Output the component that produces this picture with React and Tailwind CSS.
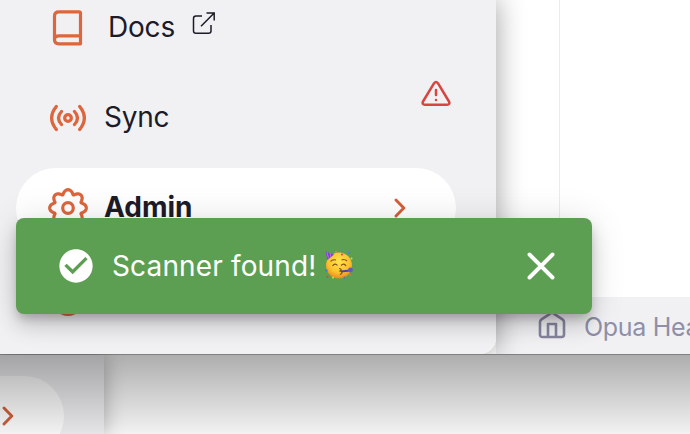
import React from "react";

function Book() {
  return (
    <svg className="h-[40px] w-[36px] shrink-0" viewBox="0 0 36 40" fill="none" stroke="#dc663d" strokeWidth="3.200" strokeLinejoin="round" strokeLinecap="round">
      <path d="M4.500 32V8Q4.500 3.800 9 3.800H29Q30.500 3.800 30.500 5.200V27.800M9 27.800H30.500M9 35.800H30.500M9 35.800Q4.500 35.800 4.500 31.800Q4.500 27.800 9 27.800M30.500 27.800V35.800" />
    </svg>
  );
}
function External() {
  return (
    <svg className="h-[24px] w-[24px] shrink-0" viewBox="0 0 24 24" fill="none" stroke="#1c1b27" strokeWidth="1.500">
      <path d="M10 4H4Q1.500 4 1.500 6.500V19Q1.500 21.300 4 21.300H16.500Q19 21.300 19 19V13M14.500 1H22.200V8.500M22.200 1L9 14.200" />
    </svg>
  );
}
function Signal() {
  return (
    <svg className="h-[28px] w-[40px] shrink-0" viewBox="0 0 40 28" fill="none" stroke="#dc663d" strokeWidth="3.300" strokeLinecap="round">
      <circle cx="20" cy="14" r="3.300" />
      <path d="M13.500 7.500Q7.500 14 13.500 20.500M26.500 7.500Q32.500 14 26.500 20.500M8.300 2.500Q-1 14 8.300 25.500M31.700 2.500Q41 14 31.700 25.500" />
    </svg>
  );
}

const gearOutline = Array.from({ length: 160 }, (_, i) => {
  const t = (i / 160) * Math.PI * 2;
  const a = t + Math.sin(8 * t) * 0.055;
  const r = 16.2 + 2.1 * Math.cos(8 * t);
  return `${(24 + r * Math.sin(a)).toFixed(2)},${(24 - r * Math.cos(a)).toFixed(2)}`;
}).join(" ");

function Gear() {
  return (
    <svg className="h-[48px] w-[48px] shrink-0" viewBox="0 0 48 48" fill="none" stroke="#dc663d" strokeWidth="3.200" strokeLinejoin="round">
      <polygon points={gearOutline} />
      <circle cx="24" cy="24" r="5.300" />
    </svg>
  );
}
function Warning() {
  return (
    <svg className="h-[28px] w-[30px] shrink-0" viewBox="0 0 30 28" fill="none" stroke="#d6453f" strokeWidth="2.500" strokeLinecap="round" strokeLinejoin="round">
      <path d="M13.100 3.200Q15 .8 16.900 3.200L28 21.500Q29.300 24.800 26 24.800H4Q.7 24.800 2 21.500ZM15 10V15M15 20V20.100" />
    </svg>
  );
}
function Chevron() {
  return (
    <svg className="h-[20px] w-[12px] shrink-0" viewBox="0 0 12 20" fill="none" stroke="#d2603a" strokeWidth="2.900" strokeLinecap="round" strokeLinejoin="round">
      <path d="M2 2L9.800 10L2 18" />
    </svg>
  );
}
function Home() {
  return (
    <svg className="h-[32px] w-[28px] shrink-0" viewBox="0 0 28 32" fill="none" stroke="#85859e" strokeWidth="2.600" strokeLinejoin="round">
      <path d="M2 11Q2 9.500 3.500 8.400L14 1.500L24.500 8.400Q26 9.500 26 11V23.500Q26 26 23.500 26H4.500Q2 26 2 23.500ZM10 26V13H18V26" />
    </svg>
  );
}
function PartyFace() {
  return (
    <svg className="h-[30px] w-[30px] shrink-0" viewBox="0 0 30 30">
      <defs>
        <radialGradient id="face" cx=".5" cy=".35" r=".65">
          <stop offset="0" stopColor="#ffe64a" />
          <stop offset=".65" stopColor="#fcc12d" />
          <stop offset="1" stopColor="#e88b1a" />
        </radialGradient>
      </defs>
      <circle cx="15" cy="15.500" r="13" fill="url(#face)" />
      <path d="M1.500 1.500L10 4.500L3.500 10Z" fill="#7b43cc" />
      <path d="M3 2L4.500 8.500M6 3L7 7" stroke="#bb70df" strokeWidth="1" />
      <path d="M6.500 11.500Q8.500 9 12 10M17.500 10Q20.500 8.500 23 11M8.500 16Q11 12.500 13.500 15.500M17 15.500Q20 12.500 22 16" fill="none" stroke="#80501a" strokeWidth="1.100" />
      <path d="M15 18.500Q19 19 16 21Q20 22.500 16 24.500" fill="none" stroke="#80501a" strokeWidth="1.200" />
      <path d="M17 21.500L26 20.500" stroke="#4246a8" strokeWidth="2" />
      <circle cx="26.500" cy="20" r="2.400" fill="#6756bd" />
      <circle cx="12" cy="2" r="1" fill="#e5893a" />
      <circle cx="18" cy="4.500" r="1" fill="#df3c4f" />
      <circle cx="25" cy="3" r="1.100" fill="#477ae0" />
      <circle cx="27.500" cy="8.500" r="1" fill="#d5de49" />
      <circle cx="2.500" cy="20.500" r="1.100" fill="#3b74d2" />
      <circle cx="3.500" cy="27" r="1.100" fill="#dc4050" />
      <circle cx="9" cy="27.500" r="1" fill="#dcda40" />
      <circle cx="20.500" cy="27.500" r="1" fill="#7960c2" />
      <circle cx="26" cy="25" r="1" fill="#dd7143" />
    </svg>
  );
}

function Sidebar() {
  return (
    <nav className="relative z-10 h-[354px] w-[496px] shrink-0 overflow-hidden rounded-br-[16px] bg-[#f1f1f4] text-[28px] leading-[36px] text-[#1c1b27]">
      <div className="flex h-[72px] pl-[50px] pt-[8px]">
        <Book />
        <span className="ml-[22px] mt-px tracking-[-0.2px]">Docs</span>
        <span className="ml-[17px] mt-[4px]"><External /></span>
      </div>
      <div className="flex h-[96px] pl-[48px] pt-[8px]">
        <span className="mt-[24px]"><Signal /></span>
        <span className="ml-[16px] mt-[19px] tracking-[-0.25px]">Sync</span>
        <span className="ml-auto mr-[45px]"><Warning /></span>
      </div>
      <div className="ml-[16px] flex h-[80px] w-[440px] items-center rounded-[40px] bg-white pl-[28px] pr-[50px]">
        <Gear />
        <span className="mb-[2px] ml-[12px] font-bold">Admin</span>
        <span className="ml-auto"><Chevron /></span>
      </div>
      <div className="ml-[52px] mt-[36px] h-[32px] w-[32px] rounded-full bg-[#dc663d]" />
    </nav>
  );
}

export default function App() {
  return (
    <div className="relative h-[434px] w-[690px] overflow-hidden bg-white font-['Inter','Liberation_Sans',sans-serif]">
      <div className="relative flex h-[355px] overflow-hidden border-b border-[#808080] bg-white">
        <div className="relative z-10 flex shrink-0 rounded-br-[16px] shadow-[0_0_28px_1px_rgba(0,0,0,0.36)]"><Sidebar /></div>
        <main className="flex min-w-0 flex-1 flex-col">
          <div className="ml-[63px] h-[297px] border-l border-[#ececef]" />
          <div className="flex flex-1 bg-[#f1f1f4] pl-[42px] pt-[14px]">
            <Home />
            <span className="ml-[18px] whitespace-nowrap text-[25px] leading-[32px] tracking-[-0.3px] text-[#8f8fa8]">Opua Hea</span>
          </div>
        </main>
      </div>
      <div className="relative flex h-[79px] bg-white">
        <div className="h-[79px] w-[104px] bg-[#f1f1f4] pt-[21px] shadow-[0_0_20px_rgba(0,0,0,0.3)]">
          <div className="flex h-[80px] w-[64px] items-center rounded-r-[40px] bg-white pl-[2px]"><Chevron /></div>
        </div>
        <div className="absolute inset-0 bg-linear-to-b from-black/32 to-black/5" />
      </div>
      <div role="status" className="absolute left-[16px] top-[218px] z-20 flex h-[96px] w-[576px] items-center rounded-[8px] bg-[#5d9f52] pl-[40px] pr-[37px] text-[28px] text-white shadow-[0_6px_10px_-2px_rgba(0,0,0,0.2),0_12px_20px_rgba(0,0,0,0.14),0_2px_36px_rgba(0,0,0,0.12)]">
        <svg className="h-[40px] w-[40px] shrink-0" viewBox="0 0 24 24" fill="white"><path d="M12 2C6.480 2 2 6.480 2 12s4.480 10 10 10 10-4.480 10-10S17.520 2 12 2zm-2 15l-5-5 1.410-1.410L10 14.170l7.590-7.590L19 8l-9 9z" /></svg>
        <span className="ml-[16px] tracking-[0.15px]">Scanner found!</span>
        <span className="ml-[7px] mb-[2px]"><PartyFace /></span>
        <svg className="ml-auto h-[28px] w-[28px]" viewBox="0 0 28 28" stroke="white" strokeWidth="3.900" strokeLinecap="round"><path d="M2.500 2.500L25.500 25.500M25.500 2.500L2.500 25.500" /></svg>
      </div>
    </div>
  );
}
